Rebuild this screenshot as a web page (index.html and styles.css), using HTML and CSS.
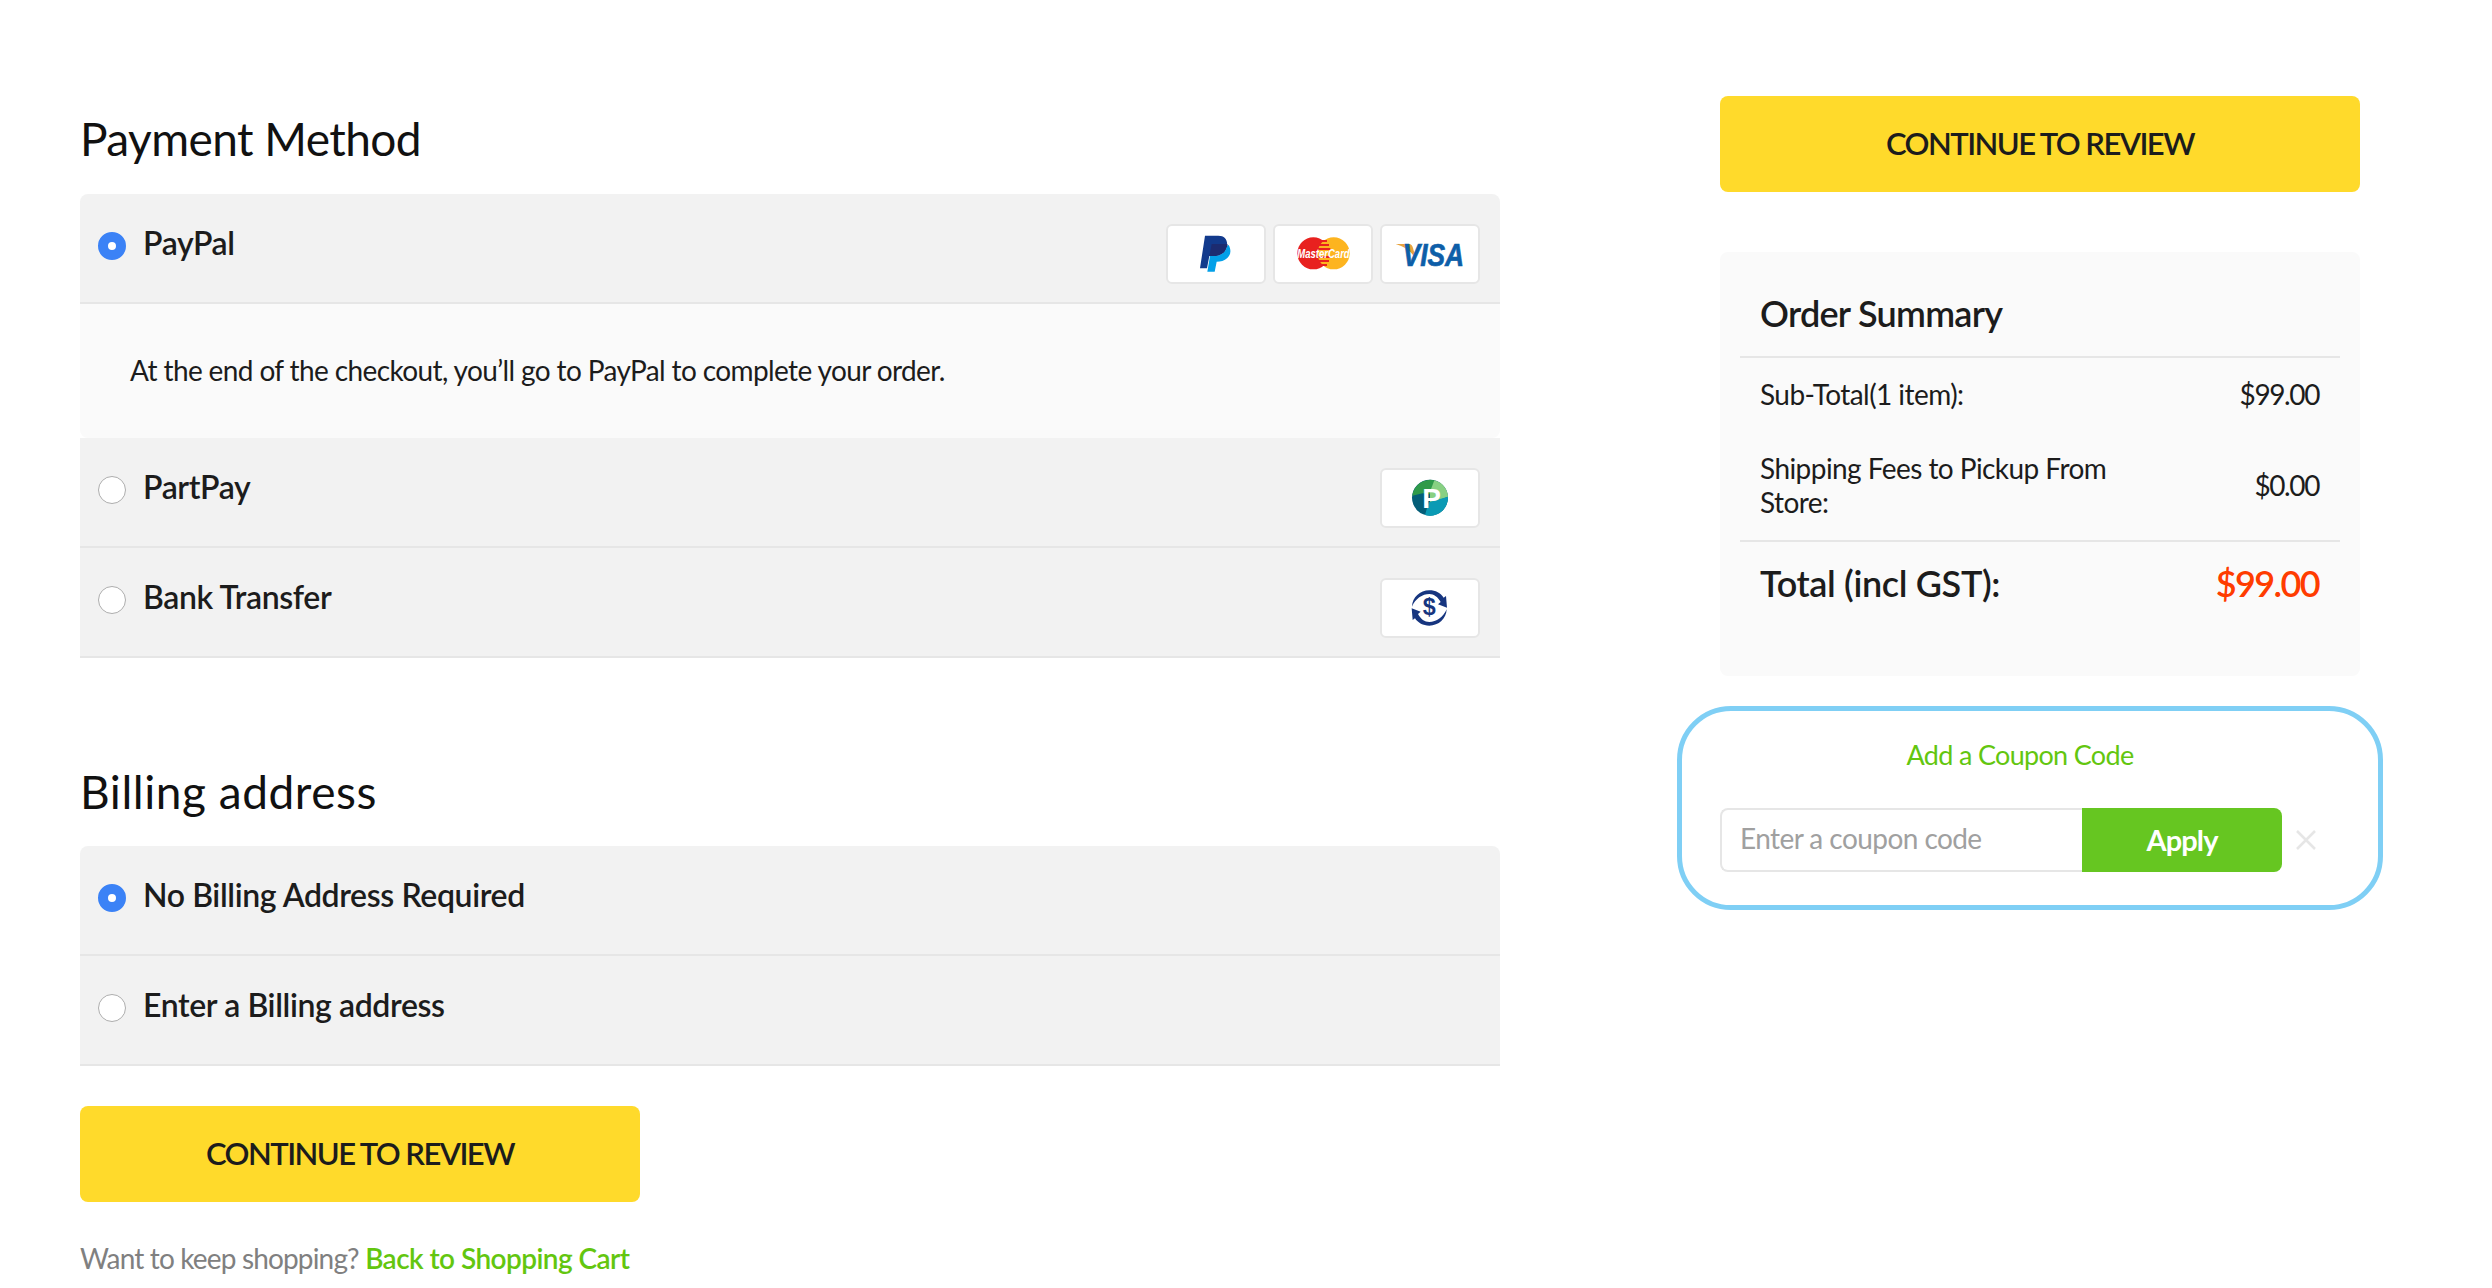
FILE: index.html
```html
<!DOCTYPE html>
<html lang="en">
<head>
<meta charset="utf-8">
<title>Checkout</title>
<link rel="stylesheet" href="styles.css">
</head>
<body>
<main class="page">
  <section class="main-col">
    <h2 class="heading heading-first">Payment Method</h2>
    <div class="panel">
      <div class="row">
        <label class="option"><input class="radio" type="radio" name="pay" checked><span>PayPal</span></label>
        <div class="chips">
          <span class="chip"><svg viewBox="-6 18 288 168" class="logo"><path fill="#123a8c" d="M105 47H145C166 47 175 62 170 82C165 100 150 108 130 108H118L111 145H90Z"/><path fill="#03a0e8" d="M176 75C184 90 183 104 172 114C163 123 152 125 140 125L134 155H112L120 108H130C150 108 165 100 170 82C171 79 173 76 176 75Z"/><path fill="#1c2b70" d="M125 72H172C174 76 172 78 170 82C165 100 150 108 130 108H118Z"/></svg></span>
          <span class="chip"><svg viewBox="-3 18 288 168" class="logo"><circle cx="112" cy="100" r="48" fill="#e8211f"/><circle cx="173" cy="100" r="48" fill="#fdb41f"/><path fill="#e8211f" d="M132 60H153V66H132ZM126 72H159V78H126ZM122 84H163V90H122ZM122 108H163V114H122ZM126 120H159V126H126ZM132 132H153V138H132Z"/><text x="64" y="113" class="mc-text" textLength="157" lengthAdjust="spacingAndGlyphs">MasterCard</text></svg></span>
          <span class="chip"><svg viewBox="321 18 288 168" class="logo"><path fill="#e7a33e" d="M362 72H402C408 72 412 76 414 84L424 122C414 97 390 80 362 72Z"/><text x="383" y="138" class="visa-text" textLength="184" lengthAdjust="spacingAndGlyphs">VISA</text></svg></span>
        </div>
      </div>
      <div class="detail"><p>At the end of the checkout, you’ll go to PayPal to complete your order.</p></div>
      <div class="row">
        <label class="option"><input class="radio" type="radio" name="pay"><span>PartPay</span></label>
        <div class="chips">
          <span class="chip"><svg viewBox="6 15 288 168" class="logo"><circle cx="150" cy="98" r="54" fill="#045e78"/><path fill="#2f9a4a" d="M97 92A54 54 0 0 1 163 46L170 90L128 85Z"/><path fill="#88d082" d="M163 46A54 54 0 0 1 204 95L150 115L150 80Z"/><path fill="#0a9ab4" d="M204 95A54 54 0 0 1 135 150L146 112Z"/><text x="127" y="130" class="pp-text">P</text></svg></span>
        </div>
      </div>
      <div class="row">
        <label class="option"><input class="radio" type="radio" name="pay"><span>Bank Transfer</span></label>
        <div class="chips">
          <span class="chip"><svg viewBox="6 345 288 168" class="logo"><g fill="#16357f"><path d="M96 425C97 397 120 376 148 376C167 376 182 384 191 398L198 393L201 428L174 418L182 411C174 396 162 387 148 387C127 387 106 401 96 425Z"/><path d="M200 433C199 461 176 482 148 482C129 482 114 474 105 460L98 465L95 430L122 440L114 447C122 462 134 471 148 471C169 471 190 457 200 433Z"/></g><text x="148" y="451" class="bank-text" text-anchor="middle">$</text></svg></span>
        </div>
      </div>
    </div>

    <h2 class="heading heading-next">Billing address</h2>
    <div class="panel">
      <div class="row">
        <label class="option"><input class="radio" type="radio" name="bill" checked><span>No Billing Address Required</span></label>
      </div>
      <div class="row">
        <label class="option"><input class="radio" type="radio" name="bill"><span>Enter a Billing address</span></label>
      </div>
    </div>

    <button class="cta cta-small" type="button">CONTINUE TO REVIEW</button>
    <p class="back">Want to keep shopping? <a href="#">Back to Shopping Cart</a></p>
  </section>

  <aside class="side-col">
    <button class="cta" type="button">CONTINUE TO REVIEW</button>
    <div class="summary">
      <h3 class="summary-title">Order Summary</h3>
      <div class="summary-lines">
        <div class="line"><span class="line-label">Sub-Total(1 item):</span><span class="amount">$99.00</span></div>
        <div class="line"><span class="line-label">Shipping Fees to Pickup From Store:</span><span class="amount">$0.00</span></div>
      </div>
      <div class="total"><span>Total (incl GST):</span><span class="total-amount">$99.00</span></div>
    </div>
    <div class="coupon">
      <p class="coupon-title">Add a Coupon Code</p>
      <div class="coupon-row">
        <input class="coupon-input" type="text" placeholder="Enter a coupon code">
        <button class="apply" type="button">Apply</button>
        <svg class="close" viewBox="0 0 20 20"><path d="M1 1L19 19M19 1L1 19"/></svg>
      </div>
    </div>
  </aside>
</main>
</body>
</html>
```
FILE: styles.css
```css
*, *::after { box-sizing: border-box; }
html, body { margin: 0; background: #fff; }
body {
  font-family: "Lato", "Noto Sans", sans-serif;
  color: #1c1c1c;
  height: 1288px;
  overflow: hidden;
}
button, input { font: inherit; }
.page {
  display: grid;
  grid-template-columns: 1420px 640px;
  column-gap: 220px;
  padding-left: 80px;
}
.main-col { padding-top: 109px; }
.heading {
  margin: 0;
  font-size: 46px;
  font-weight: 400;
  line-height: 60px;
  color: #111;
}
.heading-first { margin-bottom: 25px; letter-spacing: -0.012em; }
.heading-next { margin-top: 104px; margin-bottom: 24px; letter-spacing: 0.012em; }
.panel { border-radius: 8px 8px 0 0; overflow: hidden; }
.row {
  display: flex;
  justify-content: space-between;
  align-items: flex-start;
  height: 110px;
  padding: 30px 20px 0 18px;
  background: #f2f2f2;
  border-bottom: 2px solid #e6e6e6;
}
.option {
  display: flex;
  align-items: center;
  gap: 17px;
  font-size: 32px;
  font-weight: 600;
  line-height: 44px;
  letter-spacing: -0.012em;
}
.option span { position: relative; top: -3px; }
.radio {
  appearance: none;
  width: 28px;
  height: 28px;
  margin: 0;
  border-radius: 50%;
  background: #fff;
  border: 1.5px solid #adadad;
}
.radio:checked { border: 10px solid #3b82f6; background: #fff; }
.chips { display: flex; gap: 7px; }
.chip {
  display: block;
  width: 100px;
  height: 60px;
  background: #fff;
  border: 2px solid #e6e6e6;
  border-radius: 6px;
}
.logo { display: block; width: 96px; height: 56px; }
.mc-text { font-family: "Liberation Sans", sans-serif; font-weight: 700; font-style: italic; font-size: 38px; fill: #fff; }
.visa-text { font-family: "Liberation Sans", sans-serif; font-weight: 700; font-style: italic; font-size: 92px; fill: #0d5ea8; stroke: #0d5ea8; stroke-width: 2; }
.pp-text { font-family: "Liberation Sans", sans-serif; font-weight: 700; font-size: 84px; fill: #fff; }
.bank-text { font-family: "Liberation Sans", sans-serif; font-weight: 700; font-size: 70px; fill: #16357f; }
.detail {
  height: 134px;
  padding: 0 50px;
  display: flex;
  align-items: center;
  background: #fafafa;
  border-radius: 0 0 8px 8px;
  font-size: 28px;
  letter-spacing: -0.022em;
}
.detail p { margin: 0; position: relative; top: -1px; }
.cta {
  display: block;
  width: 640px;
  height: 96px;
  padding: 0 0 2px;
  border: 0;
  border-radius: 8px;
  background: #ffda2b;
  color: #1c1c1c;
  font-size: 31px;
  font-weight: 600;
  letter-spacing: -0.05em;
}
.cta-small { width: 560px; margin-top: 40px; }
.back { margin: 36px 0 0; font-size: 28px; line-height: 40px; color: #808080; letter-spacing: -0.03em; }
.back a { color: #63c60f; font-weight: 600; text-decoration: none; letter-spacing: -0.02em; }
.side-col { padding-top: 96px; }
.summary {
  margin-top: 60px;
  height: 424px;
  padding: 0 20px;
  background: #fafafa;
  border-radius: 8px;
}
.summary-title {
  margin: 0;
  height: 106px;
  padding: 36px 0 0 20px;
  font-size: 36px;
  line-height: 50px;
  font-weight: 600;
  letter-spacing: -0.02em;
  border-bottom: 2px solid #e6e6e6;
}
.summary-lines { padding: 19px 20px 0; border-bottom: 2px solid #e6e6e6; height: 184px; }
.line {
  display: flex;
  justify-content: space-between;
  align-items: center;
  font-size: 28px;
  line-height: 34px;
  margin-bottom: 40px;
  letter-spacing: -0.02em;
}
.line-label { width: 380px; }
.amount { letter-spacing: -0.05em; margin-right: 1px; }
.total {
  display: flex;
  justify-content: space-between;
  align-items: center;
  padding: 14px 20px 0;
  font-size: 36px;
  line-height: 54px;
  font-weight: 600;
  letter-spacing: -0.01em;
}
.total-amount { color: #ff3c00; letter-spacing: -0.045em; margin-right: 1px; }
.coupon { position: relative; margin-top: 30px; }
.coupon::after {
  content: "";
  position: absolute;
  left: -43px;
  right: -23px;
  top: 0;
  height: 204px;
  border: 5px solid #7fcff5;
  border-radius: 54px;
  pointer-events: none;
}
.coupon-title {
  margin: 0;
  padding-top: 29px;
  text-align: center;
  font-size: 27px;
  line-height: 40px;
  letter-spacing: -0.025em;
  color: #63c60f;
  transform: translateX(-20px);
}
.coupon-row { display: flex; align-items: center; margin-top: 33px; }
.coupon-input {
  width: 362px;
  height: 64px;
  padding: 0 18px 4px;
  border: 2px solid #e6e6e6;
  border-right: 0;
  border-radius: 8px 0 0 8px;
  font-size: 28px;
  letter-spacing: -0.02em;
  color: #1c1c1c;
  outline: none;
}
.coupon-input::placeholder { color: #a0a0a0; opacity: 1; }
.apply {
  width: 200px;
  height: 64px;
  padding: 0 0 2px;
  border: 0;
  border-radius: 0 8px 8px 0;
  background: #66c621;
  color: #fff;
  font-size: 29px;
  font-weight: 700;
  letter-spacing: -0.03em;
}
.close { width: 20px; height: 20px; margin-left: 14px; }
.close path { stroke: #e6e6e6; stroke-width: 2.5; fill: none; }
```
